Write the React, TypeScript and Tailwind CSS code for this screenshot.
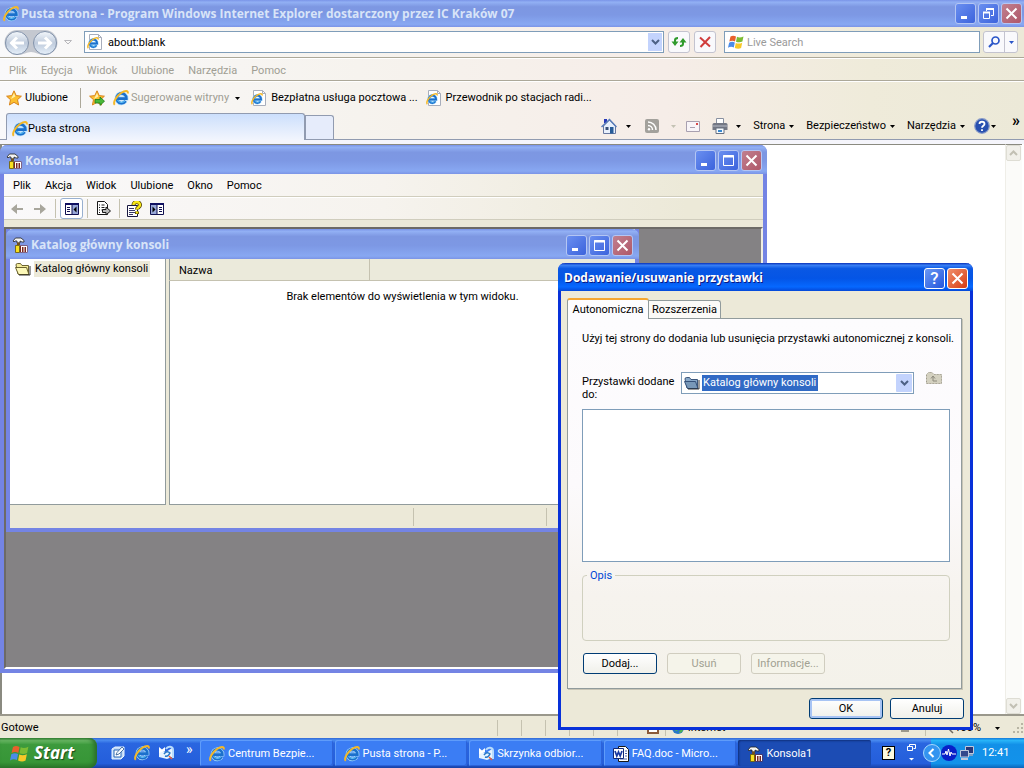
import type { ReactNode } from "react"

const titleBlue = "bg-[linear-gradient(to_bottom,#7a94e8_0%,#92b0f4_8%,#7d97e2_25%,#7d98e4_55%,#88a8f2_90%,#7b94e6_100%)]"

const ieMenu = ["Plik", "Edycja", "Widok", "Ulubione", "Narzędzia", "Pomoc"]
const consoleMenu = ["Plik", "Akcja", "Widok", "Ulubione", "Okno", "Pomoc"]

const tasks = [
  { label: "Centrum Bezpie...", icon: IeIcon, active: false },
  { label: "Pusta strona - P...", icon: IeIcon, active: false },
  { label: "Skrzynka odbior...", icon: OutlookIcon, active: false },
  { label: "FAQ.doc - Micro...", icon: WordIcon, active: false },
  { label: "Konsola1", icon: ConsoleIcon, active: true }
]

export default function App() {
  return (
    <div className="relative flex h-screen flex-col overflow-hidden bg-white font-['Roboto','DejaVu_Sans',sans-serif] text-[11px] leading-4 text-black">
      <Browser />
      <ConsoleWindow />
      <SnapInDialog />
      <Taskbar />
    </div>
  )
}

/* Internet Explorer */

function Browser() {
  return (
    <div className="flex min-h-0 flex-1 flex-col">
      <header className={`flex h-[27px] shrink-0 items-center pl-[3px] pr-[2px] ${titleBlue}`}>
        <IeIcon className="h-4 w-4" />
        <TitleText className="ml-[2px] text-[#d8e4f8]">
          Pusta strona - Program Windows Internet Explorer dostarczony przez IC Kraków 07
        </TitleText>
        <WindowButtons restore />
      </header>

      <div className="shrink-0 bg-[linear-gradient(to_right,#f9f9fa_0%,#f6f3ee_35%,#f6ede8_65%,#efebda_85%,#ece9d8_100%)]">
        {/* Address row */}
        <div className="flex h-[31px] items-center border-b border-[#aca899] pr-[6px] pl-1">
          <NavButtons />
          <form className="ml-3 flex h-[22px] flex-1 items-center border border-[#7f9db9] bg-white pl-[2px]">
            <PageIcon className="h-4 w-4" />
            <input
              aria-label="Adres"
              defaultValue="about:blank"
              className="ml-[5px] min-w-0 flex-1 bg-transparent pt-px outline-none"
            />
            <button type="button" aria-label="Pokaż adresy" className="mr-px flex h-[18px] w-[14px] items-center justify-center bg-[#c3d3fd]">
              <Chevron className="h-[6px] w-[9px] text-[#4d6185]" />
            </button>
          </form>
          <ToolButton label="Odśwież">
            <RefreshIcon className="h-4 w-4" />
          </ToolButton>
          <ToolButton label="Zatrzymaj">
            <svg className="h-3 w-3" viewBox="0 0 12 12" stroke="#d03c3c" strokeWidth="2">
              <path d="M1 1.500L11 10.500M11 1L1.500 11" />
            </svg>
          </ToolButton>
          <form className="ml-2 flex h-[22px] w-64 shrink-0 items-center border border-[#7f9db9] bg-white pl-[3px]">
            <WindowsFlag className="h-4 w-4" />
            <input
              aria-label="Live Search"
              placeholder="Live Search"
              className="ml-[3px] min-w-0 flex-1 bg-transparent pt-px outline-none placeholder:text-[#9a9a9a]"
            />
          </form>
          <div className="ml-[3px] flex h-[22px] rounded-[3px] border border-[#c3c3cf] bg-[#f9f9fc]">
            <button aria-label="Szukaj" className="flex w-[21px] items-center justify-center border-r border-[#c3c3cf]">
              <svg className="h-3 w-3" viewBox="0 0 12 12" fill="none" stroke="#2a55c8">
                <circle cx="7.500" cy="4.500" r="3.500" strokeWidth="1.700" />
                <path d="M5 7L1 11" strokeWidth="2.200" />
              </svg>
            </button>
            <button aria-label="Opcje wyszukiwania" className="flex w-3 items-center justify-center">
              <Caret className="text-[#2a55c8]" />
            </button>
          </div>
        </div>

        {/* Menu */}
        <nav className="flex h-[23px] items-center gap-[14px] border-t border-b border-t-white border-b-[#aca899] pt-[3px] pl-[9px] text-[#a09e94]">
          {ieMenu.map((item) => (
            <button key={item}>{item}</button>
          ))}
        </nav>

        {/* Favourites */}
        <div className="flex h-8 items-center border-t border-white pt-px pl-[6px]">
          <button className="flex items-center gap-[3px]">
            <StarIcon className="h-4 w-4" />
            Ulubione
          </button>
          <span className="mx-3 h-5 w-px bg-[#aca899]" />
          <button aria-label="Dodaj do ulubionych" className="mr-2 -ml-1">
            <StarIcon className="h-4 w-4" arrow />
          </button>
          <button className="flex items-center gap-[2px] text-[#a09e94]">
            <IeIcon className="h-4 w-4" />
            Sugerowane witryny
            <Caret className="ml-1 text-black" />
          </button>
          <a href="#poczta" className="ml-[11px] flex items-center gap-1">
            <PageIcon className="h-4 w-4" />
            Bezpłatna usługa pocztowa ...
          </a>
          <a href="#radio" className="ml-2 flex items-center gap-1">
            <PageIcon className="h-4 w-4" />
            Przewodnik po stacjach radi...
          </a>
        </div>

        {/* Tabs and command bar */}
        <div className="flex h-[27px] items-end border-b border-[#919bb0] pl-[6px]">
          <button className="-mb-px flex h-[27px] w-[299px] items-center rounded-t-[3px] border border-b-0 border-[#919bb0] bg-[linear-gradient(to_bottom,#ccdffc,#f2f5fd)] pt-[3px] pl-[5px]">
            <IeIcon className="h-4 w-4" />
            Pusta strona
          </button>
          <button aria-label="Nowa karta" className="h-6 w-[29px] rounded-tr-[3px] border border-b-0 border-[#919bb0] bg-[#e6ecfb]" />
          <div className="ml-auto flex h-[26px] items-center pr-1">
            <HomeIcon className="h-4 w-4" />
            <Caret className="ml-[9px]" />
            <RssIcon className="ml-[14px] h-[14px] w-[14px]" />
            <Caret className="ml-3 text-[#c4c2b4]" />
            <MailIcon className="ml-[10px] h-[11px] w-[14px]" />
            <PrinterIcon className="ml-3 h-4 w-4" />
            <Caret className="ml-2" />
            <CommandMenu label="Strona" />
            <CommandMenu label="Bezpieczeństwo" />
            <CommandMenu label="Narzędzia" />
            <HelpIcon className="ml-[9px] h-4 w-4" />
            <Caret className="ml-[1px]" />
            <span className="ml-4 self-start text-[16px] leading-none font-bold">»</span>
          </div>
        </div>
      </div>

      {/* Page */}
      <main className="flex min-h-0 flex-1 border-t-4 border-[#f5f5fb]">
        <div className="flex-1 border-t border-l-2 border-[#8a8a80]" />
        <div className="mr-[2px] flex w-[17px] flex-col justify-between border-t border-l border-t-[#8a8a80] border-l-[#efeee8] bg-[#fbfbf9]">
          <ScrollButton label="W górę" up />
          <ScrollButton label="W dół" />
        </div>
      </main>

      <footer className="flex h-6 shrink-0 items-center border-t-2 border-[#9a988c] bg-[#ece9d8] pt-[2px] pl-px">
        Gotowe
        <div className="ml-auto flex h-full items-center">
          {[0, 1, 2, 3, 4, 5].map((n) => (
            <span key={n} className="h-4 w-6 border-l border-[#c5c2b0]" />
          ))}
          <span className="ml-[6px] h-[11px] w-3 border-2 border-[#8a5a3a] bg-white" />
          <span className="ml-[6px] h-4 border-l border-[#c5c2b0]" />
          <GlobeIcon className="mr-1 ml-[6px] h-3 w-3" />
          Internet
          <span className="ml-44 h-2 w-2 bg-[#9a988c]" />
          <span className="mr-4 ml-4 h-4 border-l border-[#c5c2b0]" />
          <svg className="h-3 w-3" viewBox="0 0 12 12" fill="none" stroke="#6d6a60" strokeWidth="1.500">
            <circle cx="4" cy="4" r="3" />
            <path d="M6 6L11 11" />
          </svg>
          100%
          <Caret className="mr-3 ml-[14px]" />
          <Grip />
        </div>
      </footer>
    </div>
  )
}

function TitleText({ children, className = "" }: { children: ReactNode; className?: string }) {
  return (
    <h1 className={`flex-1 truncate font-['Open_Sans',sans-serif] text-[12px] font-bold ${className}`}>{children}</h1>
  )
}

function WindowButtons({ restore = false }: { restore?: boolean }) {
  const box = "flex h-[21px] w-[21px] items-center justify-center rounded-[3px] border border-[#b4c6f4]"
  return (
    <div className="flex shrink-0 gap-[2px]">
      <button aria-label="Minimalizuj" className={`${box} bg-[linear-gradient(135deg,#6a8ff0,#3c63dc)]`}>
        <svg className="h-[13px] w-[13px]" viewBox="0 0 13 13">
          <path d="M2 9h6v3H2z" fill="#fff" />
        </svg>
      </button>
      <button aria-label={restore ? "Przywróć" : "Maksymalizuj"} className={`${box} bg-[linear-gradient(135deg,#6a8ff0,#3c63dc)]`}>
        <svg className="h-[13px] w-[13px]" viewBox="0 0 13 13" fill="none" stroke="#fff">
          {restore ? (
            <>
              <path d="M4.500 4V2.500h7v6H9" />
              <path d="M4 2h8" strokeWidth="2" />
              <path d="M1.500 5.500h6v6h-6z" />
              <path d="M1 5.500h7" strokeWidth="2" />
            </>
          ) : (
            <>
              <path d="M1.500 1.500h10v10h-10z" />
              <path d="M1 2.500h11" strokeWidth="2" />
            </>
          )}
        </svg>
      </button>
      <button aria-label="Zamknij" className={`${box} bg-[linear-gradient(135deg,#c08090,#b05868)]`}>
        <CloseCross />
      </button>
    </div>
  )
}

function CloseCross() {
  return (
    <svg className="h-[13px] w-[13px]" viewBox="0 0 13 13" stroke="#fff" strokeWidth="2">
      <path d="M1.500 1.500L11.500 11.500M11.500 1.500L1.500 11.500" />
    </svg>
  )
}

function NavButtons() {
  return (
    <div className="flex shrink-0 items-center">
      <svg className="h-[27px] w-[54px]" viewBox="0 0 54 27">
        <defs>
          <linearGradient id="orb" x1="0" y1="0" x2="0" y2="1">
            <stop offset="0" stopColor="#f4f8fc" />
            <stop offset="0.5" stopColor="#bfcbdc" />
            <stop offset="1" stopColor="#e6f0fa" />
          </linearGradient>
        </defs>
        <path d="M13 1H41A12.500 12.500 0 0 1 41 26C34 26 32 23 27 23S20 26 13 26A12.500 12.500 0 0 1 13 1Z" fill="#c4c8d0" />
        <circle cx="13" cy="14" r="11.500" fill="url(#orb)" stroke="#8292aa" />
        <circle cx="41" cy="14" r="11.500" fill="url(#orb)" stroke="#8292aa" />
        <path d="M20 14H8M13 8.500L7.500 14L13 19.500M34 14H46M41 8.500L46.500 14L41 19.500" fill="none" stroke="#fff" strokeWidth="3" />
      </svg>
      <svg className="ml-[6px] h-[5px] w-2" viewBox="0 0 8 5" fill="none" stroke="#b8b8bc">
        <path d="M.500.500h7L4 4z" />
      </svg>
    </div>
  )
}

function ToolButton({ label, children }: { label: string; children: ReactNode }) {
  return (
    <button
      aria-label={label}
      className="ml-1 flex h-[22px] w-[22px] shrink-0 items-center justify-center rounded-[3px] border border-[#c3c3cf] bg-[#f9f9fc]"
    >
      {children}
    </button>
  )
}

function CommandMenu({ label }: { label: string }) {
  return (
    <button className="ml-3 flex items-center gap-1">
      {label}
      <Caret />
    </button>
  )
}

function ScrollButton({ label, up = false }: { label: string; up?: boolean }) {
  return (
    <button aria-label={label} className="flex h-4 w-[15px] items-center justify-center rounded-[2px] border border-[#deddd4] bg-[#f1f0ea]">
      <Chevron className={`h-[6px] w-[9px] text-[#c2c0b4] ${up ? "rotate-180" : ""}`} />
    </button>
  )
}

/* Management console */

function ConsoleWindow() {
  return (
    <section className="absolute top-[145px] left-0 flex h-[528px] w-3/4 max-w-[767px] flex-col rounded-t-[7px] border-x-4 border-b-4 border-[#7484e4] bg-[#ece9d8]">
      <header className={`-mx-1 flex h-[29px] shrink-0 items-center rounded-t-[7px] pt-[2px] pr-[5px] pl-[6px] ${titleBlue}`}>
        <ConsoleIcon className="h-4 w-4" />
        <TitleText className="ml-[3px] text-[#d8e4f8]">Konsola1</TitleText>
        <WindowButtons />
      </header>

      <div className="bg-[linear-gradient(to_right,#faf9fa,#f6f3ee_50%,#ece9d8_90%)]">
        <nav className="flex h-[23px] items-center gap-[14px] border-b border-[#d0cdbd] pt-px pl-[9px]">
          {consoleMenu.map((item) => (
            <button key={item}>{item}</button>
          ))}
        </nav>
        <div className="flex h-[23px] items-center border-t border-b border-t-white border-b-[#d0cdbd] pl-[7px]">
          <ArrowIcon className="h-[10px] w-3 rotate-180" />
          <ArrowIcon className="ml-[11px] h-[10px] w-3" />
          <span className="mr-1 ml-[9px] h-[19px] w-px bg-[#c5c2b0]" />
          <button aria-label="Pokaż drzewo konsoli" className="flex h-[21px] w-[23px] items-center justify-center rounded-[3px] border border-[#98b0d0] bg-white">
            <PaneIcon className="h-3 w-[14px]" />
          </button>
          <span className="mr-2 ml-1 h-[19px] w-px bg-[#c5c2b0]" />
          <button aria-label="Eksportuj listę">
            <ExportIcon className="h-[15px] w-[15px]" />
          </button>
          <span className="mr-[6px] ml-2 h-[19px] w-px bg-[#c5c2b0]" />
          <button aria-label="Pomoc">
            <HelpPageIcon className="h-4 w-4" />
          </button>
          <button aria-label="Okienko akcji" className="ml-2">
            <PaneIcon className="h-3 w-[14px] -scale-x-100" />
          </button>
        </div>
      </div>

      <div className="mt-[7px] min-h-0 flex-1 border-2 border-t-[#6d6a66] border-r-[#f1efe2] border-b-white border-l-[#6d6a66] bg-[#848284]">
        <ConsoleRoot />
      </div>
    </section>
  )
}

function ConsoleRoot() {
  return (
    <section className="flex h-[303px] w-11/12 max-w-[633px] flex-col border-x-4 border-b-4 border-[#7484e4] bg-[#ece9d8]">
      <header className={`-mx-1 flex h-[30px] shrink-0 items-center rounded-t-[7px] pt-[2px] pr-[6px] pl-[6px] ${titleBlue}`}>
        <ConsoleIcon className="h-4 w-4" />
        <TitleText className="ml-[3px] text-[#d8e4f8]">Katalog główny konsoli</TitleText>
        <WindowButtons />
      </header>
      <div className="flex min-h-0 flex-1">
        <div className="w-[156px] shrink-0 border-r border-b border-[#919b9c] bg-white pt-[2px] pl-[5px]">
          <div className="flex items-center gap-[3px]">
            <FolderIcon className="h-4 w-4" />
            <span className="bg-[#ece9d8] pr-[2px] pl-px">Katalog główny konsoli</span>
          </div>
        </div>
        <table className="ml-[3px] h-full flex-1 border-b border-l border-[#919b9c] bg-white">
          <thead>
            <tr className="h-[21px] bg-[#ebeadb] text-left">
              <th scope="col" className="w-[200px] border-r border-b border-[#c5c2b0] pt-[3px] pl-[9px] font-normal">Nazwa</th>
              <th scope="col" aria-label="Opis" className="border-b border-[#c5c2b0]" />
            </tr>
          </thead>
          <tbody>
            <tr>
              <td colSpan={2} className="pt-2 text-center align-top">
                Brak elementów do wyświetlenia w tym widoku.
              </td>
            </tr>
          </tbody>
        </table>
      </div>
      <div className="flex h-[23px] shrink-0 items-center">
        <span className="h-[18px] w-[404px] border-r border-[#c5c2b0]" />
        <span className="h-[18px] w-[133px] border-r border-[#c5c2b0]" />
      </div>
    </section>
  )
}

/* Add/remove snap-in dialog */

function SnapInDialog() {
  return (
    <section
      role="dialog"
      aria-label="Dodawanie/usuwanie przystawki"
      className="absolute top-[263px] right-[51px] flex w-[415px] flex-col rounded-t-[7px] border-x-[3px] border-b-[3px] border-[#0831d9] bg-[#ece9d8]"
    >
      <header className="-mx-[3px] flex h-7 items-center rounded-t-[7px] bg-[linear-gradient(to_bottom,#0830b8_0%,#3a80f4_8%,#0a58e4_20%,#0455e6_55%,#0668ff_85%,#0448d8_100%)] pt-[2px] pr-[5px] pl-[6px]">
        <TitleText className="text-white [text-shadow:1px_1px_0_#0a1883]">Dodawanie/usuwanie przystawki</TitleText>
        <div className="flex gap-[2px]">
          <button aria-label="Pomoc" className="flex h-[21px] w-[21px] items-center justify-center rounded-[3px] border border-white bg-[linear-gradient(135deg,#6a98f4,#2456dc)] text-[17px] font-medium text-white">
            ?
          </button>
          <button aria-label="Zamknij" className="flex h-[21px] w-[21px] items-center justify-center rounded-[3px] border border-white bg-[linear-gradient(135deg,#f0906c,#d83c14)]">
            <CloseCross />
          </button>
        </div>
      </header>

      <div className="pt-[7px] pr-2 pl-[6px]">
        <div role="tablist" className="flex items-end">
          <button role="tab" aria-selected="true" className="relative -mb-px h-[21px] w-[82px] rounded-t-[3px] border border-t-2 border-b-0 border-[#919b9c] border-t-[#f5a630] bg-[#fdfcfe]">
            Autonomiczna
          </button>
          <button role="tab" aria-selected="false" className="h-[18px] w-[72px] rounded-tr-[3px] border border-b-0 border-l-0 border-[#919b9c] bg-[#fbfaf7] pt-px">
            Rozszerzenia
          </button>
        </div>

        <div className="border border-[#919b9c] bg-[linear-gradient(to_bottom,#fdfcfe,#fcfafc_45%,#f6f3ee_75%,#f4f2ea)] pr-[11px] pb-[14px] pl-[14px] shadow-[1px_1px_0_#c8c5b6]">
          <p className="pt-3 whitespace-nowrap">
            Użyj tej strony do dodania lub usunięcia przystawki autonomicznej z konsoli.
          </p>

          <div className="mt-[25px] flex items-start">
            <label htmlFor="parent" className="w-[99px] pt-[3px] leading-[13px]">
              Przystawki dodane do:
            </label>
            <div className="flex h-[22px] w-[233px] items-center border border-[#7f9db9] bg-white pr-px pl-[2px]">
              <FolderIcon className="mr-[2px] h-4 w-4" selected />
              <select id="parent" className="appearance-none bg-[#316ac5] px-px leading-4 text-white outline-none">
                <option>Katalog główny konsoli</option>
              </select>
              <span className="ml-auto flex h-[18px] w-4 items-center justify-center rounded-[1px] bg-[#c3d3fd]">
                <Chevron className="h-[6px] w-[9px] text-[#4d6185]" />
              </span>
            </div>
            <button disabled aria-label="Poziom w górę" className="ml-3">
              <UpFolderIcon className="h-4 w-4" />
            </button>
          </div>

          <div role="listbox" aria-label="Przystawki" className="mt-2 h-[153px] border border-[#7f9db9] bg-white" />

          <fieldset className="mt-[5px] h-[74px] rounded-[4px] border border-[#d0d0bf] pl-1">
            <legend className="px-[3px] pt-px text-[#0046d5]">Opis</legend>
          </fieldset>

          <div className="mt-3 flex gap-[10px] pl-px">
            <DialogButton>Dodaj...</DialogButton>
            <DialogButton disabled>Usuń</DialogButton>
            <DialogButton disabled>Informacje...</DialogButton>
          </div>
        </div>
      </div>

      <div className="flex justify-end gap-[7px] pt-[9px] pr-[6px] pb-2">
        <DialogButton primary>OK</DialogButton>
        <DialogButton>Anuluj</DialogButton>
      </div>
    </section>
  )
}

function DialogButton({ children, disabled = false, primary = false }: { children: ReactNode; disabled?: boolean; primary?: boolean }) {
  const look = disabled
    ? "border-[#d0cdbf] bg-[#f5f4ea] text-[#a1a192]"
    : "border-[#003c74] bg-[linear-gradient(to_bottom,#fff,#f0f0ea)]"
  return (
    <button
      disabled={disabled}
      className={`h-[21px] w-[74px] rounded-[3px] border leading-[19px] ${look} ${primary ? "shadow-[inset_0_0_0_2px_#a8c4f4]" : ""}`}
    >
      {children}
    </button>
  )
}

/* Taskbar */

function Taskbar() {
  return (
    <footer className="relative flex h-[30px] shrink-0 items-center bg-[linear-gradient(to_bottom,#3168d5_0%,#4a8cf0_7%,#2a66e0_18%,#245edb_85%,#1941a5_100%)] text-white">
      <button className="flex h-full w-[97px] items-center rounded-r-[8px] bg-[linear-gradient(to_bottom,#3a8a3a_0%,#6ab865_8%,#3c9a3c_22%,#379637_80%,#2a7a2a_100%)] pl-[10px] shadow-[inset_-3px_0_4px_#2a6e2a]">
        <WindowsFlag className="h-[19px] w-[19px]" />
        <span className="ml-[5px] font-['Open_Sans',sans-serif] text-[17px] font-bold italic [text-shadow:1px_1px_1px_#1a4a1a]">
          Start
        </span>
      </button>
      <div className="flex w-[103px] shrink-0 items-center gap-2 pl-[13px]">
        <DesktopIcon className="h-4 w-4" />
        <IeIcon className="h-4 w-4" />
        <OutlookIcon className="h-4 w-4" />
        <span className="mb-2 ml-1 text-[14px] leading-none">»</span>
      </div>
      <div className="flex min-w-0 flex-1 gap-[2px]">
        {tasks.map((task) => (
          <button
            key={task.label}
            className={`flex h-[26px] min-w-0 flex-1 items-center gap-[3px] rounded-[2px] pt-px pl-[9px] text-left ${
              task.active
                ? "bg-[#1c4cb4] shadow-[inset_1px_1px_2px_#10307c]"
                : "bg-[#3b7df4] shadow-[inset_1px_1px_0_#5f9cfa,inset_-1px_-1px_0_#2c62d8]"
            }`}
          >
            <task.icon className="h-4 w-4 shrink-0" />
            <span className="truncate">{task.label}</span>
          </button>
        ))}
      </div>
      <div className="flex w-[60px] shrink-0 items-center pl-[11px]">
        <span className="flex h-[14px] w-[13px] items-center justify-center border border-black bg-[#fdfbe0] font-bold text-black">?</span>
        <svg className="ml-3 h-[18px] w-[9px]" viewBox="0 0 9 18" fill="none" stroke="#fff">
          <path d="M2.500 2.500V.500h6v4h-2M.500 2.500h5v4h-5z" />
          <path d="M2 14h5L4.500 16.500z" fill="#fff" stroke="none" />
        </svg>
      </div>
      <div className="flex h-full w-[93px] shrink-0 items-center bg-[linear-gradient(to_bottom,#1478d8_0%,#28b4f8_8%,#1290e8_22%,#1292ea_85%,#0c64b8_100%)]">
        <button aria-label="Pokaż ukryte ikony" className="-ml-2 h-[18px] w-[18px]">
          <svg viewBox="0 0 18 18">
            <circle cx="9" cy="9" r="8.500" fill="#3494f0" stroke="#a8d8fc" />
            <path d="M10.500 5L6.500 9L10.500 13" fill="none" stroke="#fff" strokeWidth="2" />
          </svg>
        </button>
        <svg className="h-4 w-4" viewBox="0 0 16 16">
          <circle cx="8" cy="8" r="8" fill="#0820c8" />
          <path d="M1 9h3l1-3 1 4 1.500-6 1.500 7 1-4 1 2h4" fill="none" stroke="#fff" />
        </svg>
        <NetworkIcon className="ml-[2px] h-4 w-4" />
        <time className="ml-[7px]">12:41</time>
      </div>
    </footer>
  )
}

/* Icons */

type IconProps = { className?: string }

function Caret({ className = "" }: IconProps) {
  return (
    <svg className={`h-[3px] w-[5px] shrink-0 ${className}`} viewBox="0 0 5 3" fill="currentColor">
      <path d="M0 0h5L2.500 3z" />
    </svg>
  )
}

function Chevron({ className }: IconProps) {
  return (
    <svg className={className} viewBox="0 0 9 6" fill="none" stroke="currentColor" strokeWidth="2">
      <path d="M1 1L4.500 4.500L8 1" />
    </svg>
  )
}

function IeMark() {
  return (
    <>
      <path d="M12.600 11A4.900 4.900 0 1 1 13.400 8.600H5" fill="none" stroke="#a4d8fa" strokeWidth="4" />
      <path d="M12.600 11A4.900 4.900 0 1 1 13.400 8.600H5" fill="none" stroke="#1c70cc" strokeWidth="2.600" />
      <path d="M11.800 11.200A4.600 4.600 0 0 1 4.500 10" fill="none" stroke="#58bcf4" strokeWidth="1.100" />
      <path d="M1.800 14.800C-.500 12.500 3.500 6 8 3C12 .500 15.500.300 14.700 3.400" fill="none" stroke="#f4b828" strokeWidth="2" />
    </>
  )
}

function IeIcon({ className }: IconProps) {
  return (
    <svg className={className} viewBox="0 0 16 16">
      <IeMark />
    </svg>
  )
}

function PageIcon({ className }: IconProps) {
  return (
    <svg className={className} viewBox="0 0 16 16">
      <path d="M2.500.500h9l3 3v12h-12z" fill="#fff" stroke="#a8aebc" />
      <path d="M11.500.500v3h3" fill="none" stroke="#a8aebc" />
      <g transform="translate(0 3) scale(.75)">
        <IeMark />
      </g>
    </svg>
  )
}

function WindowsFlag({ className }: IconProps) {
  return (
    <svg className={className} viewBox="0 0 16 16">
      <path d="M2.500 2.500C4.500 1.200 6 1.500 8 2.500L7 7.500C5 6.500 3.500 6.500 1.300 7.600z" fill="#e8602c" />
      <path d="M9 2.800C11 3.800 13 3.600 15.500 2.400L14.400 7.600C12.400 8.600 10 8.600 8 7.700z" fill="#7cbc34" />
      <path d="M1.100 8.700C3 7.600 5 7.600 6.800 8.500L5.800 13.500C4 12.500 2 12.500 0 13.800z" fill="#4c8ce8" />
      <path d="M7.800 8.900C10 9.900 12 9.700 14.200 8.700L13.100 13.900C11 15 9 14.800 6.800 13.900z" fill="#f8c828" />
    </svg>
  )
}

function RefreshIcon({ className }: IconProps) {
  return (
    <svg className={className} viewBox="0 0 16 16" fill="#2f9a2c">
      <path d="M4 12L.500 7.500H3V6Q3 3 7 3V5Q5 5 5 6.500V7.500H7.500z" />
      <path d="M12 4L15.500 8.500H13V10Q13 13 9 13V11Q11 11 11 9.500V8.500H8.500z" />
    </svg>
  )
}

function StarIcon({ className, arrow = false }: IconProps & { arrow?: boolean }) {
  return (
    <svg className={className} viewBox="0 0 16 16">
      <path d="M8 .800L10.200 5.600L15.400 6.200L11.500 9.700L12.600 15L8 12.300L3.400 15L4.500 9.700L.600 6.200L5.800 5.600z" fill="#fcc030" stroke="#d8841c" />
      <path d="M8 3L9.300 6.500L5 9z" fill="#fff0a8" />
      {arrow && <path d="M6 9.500h5V7l4.500 4.200L11 15.400V13H6z" fill="#48b838" stroke="#207818" strokeWidth=".8" />}
    </svg>
  )
}

function HomeIcon({ className }: IconProps) {
  return (
    <svg className={className} viewBox="0 0 16 16">
      <path d="M3 1h3v4H3z" fill="#2838b8" />
      <path d="M2.500 8v7.500h12V8L8.500 2z" fill="#e8f0fc" stroke="#6878a0" />
      <path d="M.500 9L8.500 1.500L15.500 9" fill="none" stroke="#587cb8" strokeWidth="1.500" />
      <path d="M9 9h3.500v6.500H9z" fill="#285c98" />
      <path d="M4.500 9h3v3h-3z" fill="#385078" />
    </svg>
  )
}

function RssIcon({ className }: IconProps) {
  return (
    <svg className={className} viewBox="0 0 14 14">
      <rect width="14" height="14" rx="2" fill="#a3a19c" />
      <g fill="none" stroke="#fff" strokeWidth="1.500">
        <path d="M3 3A8 8 0 0 1 11 11M3 6.500A4.500 4.500 0 0 1 7.500 11" />
      </g>
      <circle cx="4" cy="10.200" r="1.200" fill="#fff" />
    </svg>
  )
}

function MailIcon({ className }: IconProps) {
  return (
    <svg className={className} viewBox="0 0 14 11">
      <path d="M.500.500h13v10H.500z" fill="#f8f4f8" stroke="#a8a0b0" />
      <path d="M10 2h2v2h-2z" fill="#d84848" />
      <path d="M4 6.500h5" stroke="#a8a0b0" />
    </svg>
  )
}

function PrinterIcon({ className }: IconProps) {
  return (
    <svg className={className} viewBox="0 0 16 16">
      <path d="M4.500.500h7v5h-7z" fill="#fff" stroke="#8890a0" />
      <path d="M.500 6.500Q.500 5 2 5H14Q15.500 5 15.500 6.500V12H.500z" fill="#747884" />
      <path d="M1 8h14" stroke="#b8bcc8" />
      <path d="M4 10h8v5.500H4z" fill="#f8fcff" stroke="#687080" />
      <path d="M6 13h4" stroke="#3888d0" strokeWidth="2" />
    </svg>
  )
}

function HelpIcon({ className }: IconProps) {
  return (
    <svg className={className} viewBox="0 0 16 16">
      <circle cx="8" cy="8" r="7.300" fill="#2850b0" stroke="#8a9cc8" strokeWidth="1.200" />
      <path d="M5.500 6C5.500 3 10.500 3 10.500 6C10.500 7.700 8 7.800 8 9.800M8 11.200v1.800" fill="none" stroke="#fff" strokeWidth="1.800" />
    </svg>
  )
}

function GlobeIcon({ className }: IconProps) {
  return (
    <svg className={className} viewBox="0 0 12 12">
      <circle cx="6" cy="6" r="6" fill="#2878c8" />
      <path d="M3 2Q8 1 7 5T4 9Q1 6 3 2zM7 11Q8 7 11 8Q10 11 7 11z" fill="#50b848" />
    </svg>
  )
}

function ConsoleIcon({ className }: IconProps) {
  return (
    <svg className={className} viewBox="0 0 16 16">
      <path d="M1 4L3.500 1H9L12 3.500V5H10L8 4V6H5V4H3L2 5z" fill="#f4f4f4" stroke="#222" strokeWidth=".8" />
      <path d="M5 5.500h3V8H5z" fill="#705020" />
      <path d="M3.500 8.500h4v7h-4z" fill="#f8e020" stroke="#685800" strokeWidth=".8" />
      <path d="M8 8.500h7.500v7H8z" fill="#7c2820" />
      <path d="M9.500 10v5M12 10v5M14.500 10v5M9 9.500h6" stroke="#fff" />
    </svg>
  )
}

function ArrowIcon({ className }: IconProps) {
  return (
    <svg className={className} viewBox="0 0 12 10" fill="#a8a69c">
      <path d="M0 4h6V0l6 5l-6 5V6H0z" />
    </svg>
  )
}

function PaneIcon({ className }: IconProps) {
  return (
    <svg className={className} viewBox="0 0 14 12">
      <path d="M.500.500h13v11H.500z" fill="#fff" stroke="#101050" />
      <path d="M0 0h14v2H0z" fill="#101060" />
      <path d="M7 2h6v9H7z" fill="#98a8d8" />
      <path d="M7 2v9" stroke="#101050" />
      <path d="M2 4.500h3M2 6.500h3M2 8.500h3" stroke="#101050" />
      <path d="M11.500 3.500v6L8.500 6.500z" fill="#000" />
    </svg>
  )
}

function ExportIcon({ className }: IconProps) {
  return (
    <svg className={className} viewBox="0 0 15 15">
      <path d="M1.500.500h7l3 3v10h-10z" fill="#fff" stroke="#181818" />
      <path d="M3 4h1M5.500 4h3M3 6.500h1M5.500 6.500h3M3 9h1M5.500 9h1M3 11.500h1" stroke="#181818" />
      <path d="M6.500 8.500h3.500v-2.500l4.500 4l-4.500 4v-2.500H6.500z" fill="#b8b8b8" stroke="#181818" />
    </svg>
  )
}

function HelpPageIcon({ className }: IconProps) {
  return (
    <svg className={className} viewBox="0 0 16 16">
      <path d="M1.500 4.500h10v11h-10z" fill="#fff" stroke="#181840" />
      <path d="M3 7.500h5M3 9.500h6M3 11.500h6M3 13.500h4" stroke="#383868" />
      <path d="M7.500 4C7.500 0 14 0 14 4C14 6.500 11 6 11 8.500M11 10.500v2.500" fill="none" stroke="#504000" strokeWidth="4" />
      <path d="M7.500 4C7.500 0 14 0 14 4C14 6.500 11 6 11 8.500M11 10.500v2" fill="none" stroke="#f8e818" strokeWidth="2.400" />
    </svg>
  )
}

function FolderIcon({ className, selected = false }: IconProps & { selected?: boolean }) {
  return (
    <svg className={className} viewBox="0 0 16 16" stroke={selected ? "#2c4870" : "#5c5420"} strokeWidth=".9">
      <path d="M1 4Q1 2.500 2.500 2.500H5.500L7 4.500H13.500V13H3z" fill={selected ? "#88a8c8" : "#f4ec98"} />
      <path d="M.500 6.500H11.500L14 13.500H3.500z" fill={selected ? "#7898b8" : "#fcf8b8"} />
      <path d="M15 5v9H4" fill="none" stroke="#222" />
    </svg>
  )
}

function UpFolderIcon({ className }: IconProps) {
  return (
    <svg className={className} viewBox="0 0 16 16">
      <path d="M.500 11.500V2.500L2.500.500H6L8 2.500H15.500V11.500z" fill="#d4d1c0" stroke="#a09d8c" strokeDasharray="1 .5" />
      <path d="M5 6.500L7 4L9 6.500M7 4.500v4.500h4" fill="none" stroke="#8c897c" />
    </svg>
  )
}

function DesktopIcon({ className }: IconProps) {
  return (
    <svg className={className} viewBox="0 0 16 16">
      <path d="M2 4L5 2H14V11L11 14H2z" fill="#c4dcf8" stroke="#e8f4ff" />
      <path d="M4 5h7v7H4z" fill="#fff" stroke="#2868b8" />
      <path d="M6 10L7 7.500L12 2L14 4L9 9z" fill="#f8fcff" stroke="#285890" strokeWidth=".8" />
    </svg>
  )
}

function OutlookIcon({ className }: IconProps) {
  return (
    <svg className={className} viewBox="0 0 16 16">
      <path d="M1 5L8 7L14 3V12L9 14L1 12z" fill="#e8f4ff" />
      <path d="M1 2L4 4.500L7 2V6L1 8z" fill="#fff" />
      <path d="M8 4C10 .500 15 1 15 5M15 5V13" fill="none" stroke="#b8dcfc" strokeWidth="2" />
      <path d="M6 9Q9 5 12 8Q10 12 7 11" fill="none" stroke="#2878c8" strokeWidth="1.500" />
      <path d="M11 11l3 3" stroke="#e8603c" strokeWidth="1.500" />
    </svg>
  )
}

function WordIcon({ className }: IconProps) {
  return (
    <svg className={className} viewBox="0 0 16 16">
      <path d="M5.500.500h7l3 3v12h-10z" fill="#fff" stroke="#181818" />
      <path d="M12 5h2M12 7.500h2M12 10h2M7 13h7" stroke="#4860a8" />
      <path d="M.500 2.500h10v10H.500z" fill="#fff" stroke="#102878" />
      <path d="M2 5L3.800 10L5.500 6L7.200 10L9 5" fill="none" stroke="#1838a0" strokeWidth="1.700" />
    </svg>
  )
}

function NetworkIcon({ className }: IconProps) {
  return (
    <svg className={className} viewBox="0 0 16 16">
      <path d="M6.500 1.500h8v7h-8z" fill="#283878" stroke="#c0c8dc" />
      <path d="M8 10h6" stroke="#a0a8bc" strokeWidth="1.500" />
      <path d="M1.500 5.500h8v6.500h-8z" fill="#34488c" stroke="#c0c8dc" />
      <path d="M2 14h7" stroke="#c0c8dc" strokeWidth="2" />
    </svg>
  )
}

function Grip() {
  return (
    <svg className="h-3 w-3" viewBox="0 0 12 12" fill="#b8b5a4">
      <path d="M9 1h2v2H9zM9 5h2v2H9zM9 9h2v2H9zM5 5h2v2H5zM5 9h2v2H5zM1 9h2v2H1z" />
    </svg>
  )
}
